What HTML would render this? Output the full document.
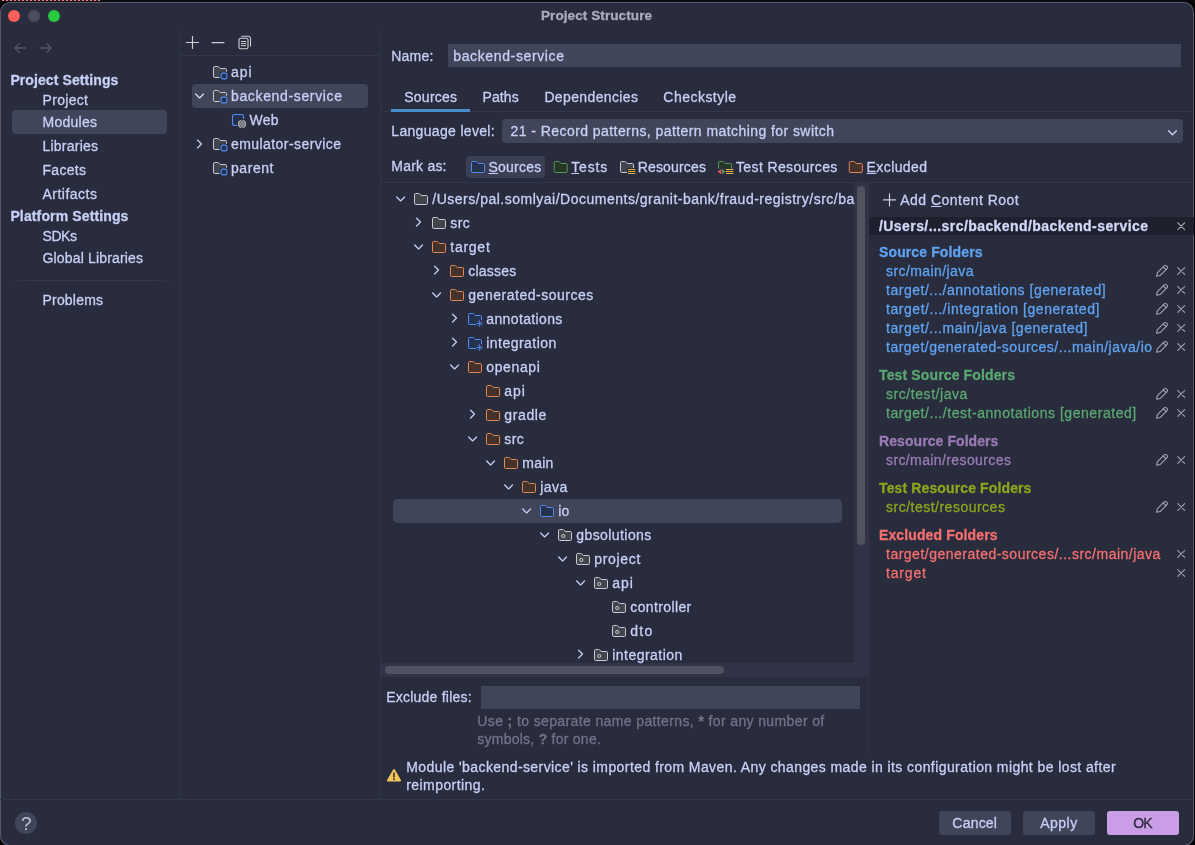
<!DOCTYPE html>
<html lang="en"><head><meta charset="utf-8"><title>Project Structure</title>
<style>
*{box-sizing:border-box}
html,body{margin:0;padding:0;background:#000;}
body{width:1195px;height:845px;overflow:hidden;position:relative;font-family:"Liberation Sans",sans-serif;font-size:14px;color:#c6d0f5;}
#top{position:absolute;left:0;top:0;width:1195px;height:2px;background:#0a0a0e}
#top i{position:absolute;left:2px;top:0;width:98px;height:1px;background:repeating-linear-gradient(90deg,#e9807e 0 2px,#2a2031 2px 4px)}
#win{position:absolute;left:0;top:1.5px;width:1194.2px;height:844.5px;background:#292c3c;border-radius:10px;overflow:hidden;
 box-shadow:inset 0 0 0 1px #565a6e}
#in{position:absolute;left:0;top:-1.5px;width:1195px;height:845px;will-change:transform}
.r,.i,.t{position:absolute}
.t{white-space:pre;line-height:20px;height:20px;-webkit-text-stroke:.3px}
.t b{font-weight:bold}
u{text-decoration:underline;text-decoration-thickness:1px;text-underline-offset:1px}
</style></head>
<body>
<div id="top"><i></i></div>
<div id="win"><div id="in">
<div class="r" style="left:8px;top:10px;width:12px;height:12px;background:#fe5f57;border-radius:6px;"></div>
<div class="r" style="left:28px;top:10px;width:12px;height:12px;background:#4a4d5e;border-radius:6px;"></div>
<div class="r" style="left:48px;top:10px;width:12px;height:12px;background:#28c840;border-radius:6px;"></div>
<svg class="i" style="left:13px;top:42px" width="14" height="12" viewBox="0 0 14 12"><path d="M12.5 6H2M6.3 1.6L1.8 6l4.5 4.4" fill="none" stroke="#54555f" stroke-width="1.3" stroke-linecap="round" stroke-linejoin="round"/></svg>
<svg class="i" style="left:39px;top:42px" width="14" height="12" viewBox="0 0 14 12"><path d="M1.5 6H12M7.7 1.6L12.2 6l-4.5 4.4" fill="none" stroke="#54555f" stroke-width="1.3" stroke-linecap="round" stroke-linejoin="round"/></svg>
<div class="r" style="left:12px;top:110px;width:155px;height:24px;background:#414559;border-radius:4px;"></div>
<div class="r" style="left:6px;top:280px;width:168px;height:1px;background:linear-gradient(90deg,transparent,#353a4e 14%,#353a4e 86%,transparent);"></div>
<div class="r" style="left:179px;top:31px;width:1px;height:768px;background:#32364a;"></div>
<div class="r" style="left:380px;top:31px;width:1px;height:768px;background:#32364a;"></div>
<svg class="i" style="left:186px;top:36px" width="14" height="14" viewBox="0 0 14 14"><path d="M6.5 .5v12M.5 6.5h12" fill="none" stroke="#cfd0d6" stroke-width="1.15" stroke-linecap="round"/></svg>
<svg class="i" style="left:211px;top:36px" width="14" height="14" viewBox="0 0 14 14"><path d="M1 6.6h12" fill="none" stroke="#cfd0d6" stroke-width="1.15" stroke-linecap="round"/></svg>
<svg class="i" style="left:238px;top:35px" width="14" height="15" viewBox="0 0 14 15"><g fill="none" stroke="#cfd0d6" stroke-width="1.1" stroke-linejoin="round" stroke-linecap="round"><rect x="1" y="3.2" width="9" height="10.6" rx="1.6"/><path d="M3.7 1.2h6.6a2.2 2.2 0 0 1 2.2 2.2v7.6"/><path d="M3.3 6.5h4.4M3.3 8.6h4.4M3.3 10.7h4.4" stroke-width="1"/></g></svg>
<div class="r" style="left:180px;top:55px;width:200px;height:1px;background:#32364a;"></div>
<div class="r" style="left:192px;top:84px;width:176px;height:24px;background:#414559;border-radius:4px;"></div>
<svg class="i" style="left:212px;top:64px" width="16" height="16" viewBox="0 0 16 16"><path d="M1.5 3.7a1.2 1.2 0 0 1 1.2-1.2h3a1.2 1.2 0 0 1 .8.3l1.9 1.7h4.9a1.2 1.2 0 0 1 1.2 1.2v6.6a1.2 1.2 0 0 1-1.2 1.2h-10.6a1.2 1.2 0 0 1-1.2-1.2z" fill="#43454c" stroke="#c9cad2" stroke-width="1" stroke-linejoin="round"/></svg>
<svg class="i" style="left:219px;top:71px" width="10" height="10" viewBox="0 0 10 10"><rect x="2.1" y="2.1" width="5.8" height="5.8" rx="1.7" fill="#292c3c" stroke="#292c3c" stroke-width="3.2"/><rect x="2.1" y="2.1" width="5.8" height="5.8" rx="1.7" fill="#25324d" stroke="#548af7" stroke-width="1.1"/></svg>
<svg class="i" style="left:193px;top:92px" width="13" height="9" viewBox="0 0 13 9"><g transform="translate(0.6 0.4)"><path d="M2.1 1.6L6 5.5L9.9 1.6" fill="none" stroke="#d3d8f5" stroke-width="1.35" stroke-linecap="round" stroke-linejoin="round"/></g></svg>
<svg class="i" style="left:212px;top:88px" width="16" height="16" viewBox="0 0 16 16"><path d="M1.5 3.7a1.2 1.2 0 0 1 1.2-1.2h3a1.2 1.2 0 0 1 .8.3l1.9 1.7h4.9a1.2 1.2 0 0 1 1.2 1.2v6.6a1.2 1.2 0 0 1-1.2 1.2h-10.6a1.2 1.2 0 0 1-1.2-1.2z" fill="#43454c" stroke="#c9cad2" stroke-width="1" stroke-linejoin="round"/></svg>
<svg class="i" style="left:219px;top:95px" width="10" height="10" viewBox="0 0 10 10"><rect x="2.1" y="2.1" width="5.8" height="5.8" rx="1.7" fill="#414559" stroke="#414559" stroke-width="3.2"/><rect x="2.1" y="2.1" width="5.8" height="5.8" rx="1.7" fill="#25324d" stroke="#548af7" stroke-width="1.1"/></svg>
<svg class="i" style="left:231px;top:113px" width="16" height="16" viewBox="0 0 16 16"><rect x="1.5" y="1.5" width="11" height="11" rx="2" fill="#25324d" stroke="#548af7" stroke-width="1.1"/><circle cx="11" cy="11" r="5.2" fill="#292c3c"/><circle cx="11" cy="11" r="4.1" fill="#d2d3d8"/><path d="M7 11h8M11 7v8M7.6 9h6.8M7.6 13h6.8" stroke="#4e505c" stroke-width=".75" fill="none"/><ellipse cx="11" cy="11" rx="2.1" ry="4" fill="none" stroke="#4e505c" stroke-width=".75"/></svg>
<svg class="i" style="left:195px;top:138px" width="9" height="13" viewBox="0 0 9 13"><g transform="translate(0.3 0)"><path d="M2.2 2.1L6.1 6L2.2 9.9" fill="none" stroke="#c2caf0" stroke-width="1.35" stroke-linecap="round" stroke-linejoin="round"/></g></svg>
<svg class="i" style="left:212px;top:136px" width="16" height="16" viewBox="0 0 16 16"><path d="M1.5 3.7a1.2 1.2 0 0 1 1.2-1.2h3a1.2 1.2 0 0 1 .8.3l1.9 1.7h4.9a1.2 1.2 0 0 1 1.2 1.2v6.6a1.2 1.2 0 0 1-1.2 1.2h-10.6a1.2 1.2 0 0 1-1.2-1.2z" fill="#43454c" stroke="#c9cad2" stroke-width="1" stroke-linejoin="round"/></svg>
<svg class="i" style="left:219px;top:143px" width="10" height="10" viewBox="0 0 10 10"><rect x="2.1" y="2.1" width="5.8" height="5.8" rx="1.7" fill="#292c3c" stroke="#292c3c" stroke-width="3.2"/><rect x="2.1" y="2.1" width="5.8" height="5.8" rx="1.7" fill="#25324d" stroke="#548af7" stroke-width="1.1"/></svg>
<svg class="i" style="left:212px;top:160px" width="16" height="16" viewBox="0 0 16 16"><path d="M1.5 3.7a1.2 1.2 0 0 1 1.2-1.2h3a1.2 1.2 0 0 1 .8.3l1.9 1.7h4.9a1.2 1.2 0 0 1 1.2 1.2v6.6a1.2 1.2 0 0 1-1.2 1.2h-10.6a1.2 1.2 0 0 1-1.2-1.2z" fill="#43454c" stroke="#c9cad2" stroke-width="1" stroke-linejoin="round"/></svg>
<svg class="i" style="left:219px;top:167px" width="10" height="10" viewBox="0 0 10 10"><rect x="2.1" y="2.1" width="5.8" height="5.8" rx="1.7" fill="#292c3c" stroke="#292c3c" stroke-width="3.2"/><rect x="2.1" y="2.1" width="5.8" height="5.8" rx="1.7" fill="#25324d" stroke="#548af7" stroke-width="1.1"/></svg>
<div class="r" style="left:447.5px;top:44px;width:733px;height:23px;background:#414559;"></div>
<div class="r" style="left:381px;top:111px;width:814px;height:1px;background:#32364a;"></div>
<div class="r" style="left:391px;top:109px;width:79px;height:3px;background:#4a8ccc;"></div>
<div class="r" style="left:501.5px;top:119px;width:681.5px;height:23.5px;background:#414559;border-radius:4px;"></div>
<svg class="i" style="left:1166px;top:129px" width="13" height="9" viewBox="0 0 13 9"><g transform="translate(0.5 0.2)"><path d="M2.1 1.6L6 5.5L9.9 1.6" fill="none" stroke="#c6d0f5" stroke-width="1.35" stroke-linecap="round" stroke-linejoin="round"/></g></svg>
<div class="r" style="left:466px;top:156px;width:79px;height:22px;background:#3b3f54;border-radius:4px;"></div>
<svg class="i" style="left:470px;top:159px" width="16" height="16" viewBox="0 0 16 16"><path d="M1.5 3.7a1.2 1.2 0 0 1 1.2-1.2h3a1.2 1.2 0 0 1 .8.3l1.9 1.7h4.9a1.2 1.2 0 0 1 1.2 1.2v6.6a1.2 1.2 0 0 1-1.2 1.2h-10.6a1.2 1.2 0 0 1-1.2-1.2z" fill="#25324d" stroke="#548af7" stroke-width="1" stroke-linejoin="round"/></svg>
<svg class="i" style="left:552px;top:159px" width="17" height="17" viewBox="0 0 17 17"><g transform="translate(0.7 0)"><path d="M1.5 3.7a1.2 1.2 0 0 1 1.2-1.2h3a1.2 1.2 0 0 1 .8.3l1.9 1.7h4.9a1.2 1.2 0 0 1 1.2 1.2v6.6a1.2 1.2 0 0 1-1.2 1.2h-10.6a1.2 1.2 0 0 1-1.2-1.2z" fill="#253627" stroke="#57965c" stroke-width="1" stroke-linejoin="round"/></g></svg>
<svg class="i" style="left:619px;top:159px" width="16" height="16" viewBox="0 0 16 16"><path d="M1.5 3.7a1.2 1.2 0 0 1 1.2-1.2h3a1.2 1.2 0 0 1 .8.3l1.9 1.7h4.9a1.2 1.2 0 0 1 1.2 1.2v6.6a1.2 1.2 0 0 1-1.2 1.2h-10.6a1.2 1.2 0 0 1-1.2-1.2z" fill="#43454c" stroke="#c9cad2" stroke-width="1" stroke-linejoin="round"/></svg>
<svg class="i" style="left:627px;top:167px" width="9" height="8" viewBox="0 0 9 8"><rect x="0" y="1" width="9" height="7" fill="#292c3c"/><path d="M1 2.5h7.3M1 4.5h7.3M1 6.5h7.3" stroke="#e8b339" stroke-width="1" fill="none"/></svg>
<svg class="i" style="left:717px;top:159px" width="16" height="16" viewBox="0 0 16 16"><path d="M1.5 3.7a1.2 1.2 0 0 1 1.2-1.2h3a1.2 1.2 0 0 1 .8.3l1.9 1.7h4.9a1.2 1.2 0 0 1 1.2 1.2v6.6a1.2 1.2 0 0 1-1.2 1.2h-10.6a1.2 1.2 0 0 1-1.2-1.2z" fill="#253627" stroke="#57965c" stroke-width="1" stroke-linejoin="round"/></svg>
<svg class="i" style="left:716px;top:167px" width="18" height="9" viewBox="0 0 18 9"><rect x="0" y="1.5" width="18" height="7.5" fill="#292c3c"/><path d="M5.3 2v5.2L1.6 4.6z" fill="#e55765"/><path d="M6.1 2v5.2l3.6-2.6z" fill="#57965c"/><path d="M10 2.5h7.3M10 4.5h7.3M10 6.5h7.3" stroke="#e8b339" stroke-width="1" fill="none"/></svg>
<svg class="i" style="left:847px;top:159px" width="17" height="17" viewBox="0 0 17 17"><g transform="translate(0.8 0)"><path d="M1.5 3.7a1.2 1.2 0 0 1 1.2-1.2h3a1.2 1.2 0 0 1 .8.3l1.9 1.7h4.9a1.2 1.2 0 0 1 1.2 1.2v6.6a1.2 1.2 0 0 1-1.2 1.2h-10.6a1.2 1.2 0 0 1-1.2-1.2z" fill="#45322b" stroke="#e08855" stroke-width="1" stroke-linejoin="round"/></g></svg>
<div class="r" style="left:381px;top:182px;width:814px;height:1px;background:#32364a;"></div>
<div class="r" style="left:393px;top:499px;width:449px;height:24px;background:#414559;border-radius:5px;"></div>
<svg class="i" style="left:394px;top:195px" width="13" height="9" viewBox="0 0 13 9"><g transform="translate(0.6 0.4)"><path d="M2.1 1.6L6 5.5L9.9 1.6" fill="none" stroke="#c2caf0" stroke-width="1.35" stroke-linecap="round" stroke-linejoin="round"/></g></svg>
<svg class="i" style="left:413px;top:191px" width="16" height="16" viewBox="0 0 16 16"><path d="M1.5 3.7a1.2 1.2 0 0 1 1.2-1.2h3a1.2 1.2 0 0 1 .8.3l1.9 1.7h4.9a1.2 1.2 0 0 1 1.2 1.2v6.6a1.2 1.2 0 0 1-1.2 1.2h-10.6a1.2 1.2 0 0 1-1.2-1.2z" fill="#43454c" stroke="#c9cad2" stroke-width="1" stroke-linejoin="round"/></svg>
<svg class="i" style="left:414px;top:216px" width="9" height="13" viewBox="0 0 9 13"><g transform="translate(0.4 0.1)"><path d="M2.2 2.1L6.1 6L2.2 9.9" fill="none" stroke="#c2caf0" stroke-width="1.35" stroke-linecap="round" stroke-linejoin="round"/></g></svg>
<svg class="i" style="left:431px;top:215px" width="16" height="16" viewBox="0 0 16 16"><path d="M1.5 3.7a1.2 1.2 0 0 1 1.2-1.2h3a1.2 1.2 0 0 1 .8.3l1.9 1.7h4.9a1.2 1.2 0 0 1 1.2 1.2v6.6a1.2 1.2 0 0 1-1.2 1.2h-10.6a1.2 1.2 0 0 1-1.2-1.2z" fill="#43454c" stroke="#c9cad2" stroke-width="1" stroke-linejoin="round"/></svg>
<svg class="i" style="left:412px;top:243px" width="13" height="9" viewBox="0 0 13 9"><g transform="translate(0.6 0.4)"><path d="M2.1 1.6L6 5.5L9.9 1.6" fill="none" stroke="#c2caf0" stroke-width="1.35" stroke-linecap="round" stroke-linejoin="round"/></g></svg>
<svg class="i" style="left:431px;top:239px" width="16" height="16" viewBox="0 0 16 16"><path d="M1.5 3.7a1.2 1.2 0 0 1 1.2-1.2h3a1.2 1.2 0 0 1 .8.3l1.9 1.7h4.9a1.2 1.2 0 0 1 1.2 1.2v6.6a1.2 1.2 0 0 1-1.2 1.2h-10.6a1.2 1.2 0 0 1-1.2-1.2z" fill="#45322b" stroke="#e08855" stroke-width="1" stroke-linejoin="round"/></svg>
<svg class="i" style="left:432px;top:264px" width="9" height="13" viewBox="0 0 9 13"><g transform="translate(0.4 0.1)"><path d="M2.2 2.1L6.1 6L2.2 9.9" fill="none" stroke="#c2caf0" stroke-width="1.35" stroke-linecap="round" stroke-linejoin="round"/></g></svg>
<svg class="i" style="left:449px;top:263px" width="16" height="16" viewBox="0 0 16 16"><path d="M1.5 3.7a1.2 1.2 0 0 1 1.2-1.2h3a1.2 1.2 0 0 1 .8.3l1.9 1.7h4.9a1.2 1.2 0 0 1 1.2 1.2v6.6a1.2 1.2 0 0 1-1.2 1.2h-10.6a1.2 1.2 0 0 1-1.2-1.2z" fill="#45322b" stroke="#e08855" stroke-width="1" stroke-linejoin="round"/></svg>
<svg class="i" style="left:430px;top:291px" width="13" height="9" viewBox="0 0 13 9"><g transform="translate(0.6 0.4)"><path d="M2.1 1.6L6 5.5L9.9 1.6" fill="none" stroke="#c2caf0" stroke-width="1.35" stroke-linecap="round" stroke-linejoin="round"/></g></svg>
<svg class="i" style="left:449px;top:287px" width="16" height="16" viewBox="0 0 16 16"><path d="M1.5 3.7a1.2 1.2 0 0 1 1.2-1.2h3a1.2 1.2 0 0 1 .8.3l1.9 1.7h4.9a1.2 1.2 0 0 1 1.2 1.2v6.6a1.2 1.2 0 0 1-1.2 1.2h-10.6a1.2 1.2 0 0 1-1.2-1.2z" fill="#45322b" stroke="#e08855" stroke-width="1" stroke-linejoin="round"/></svg>
<svg class="i" style="left:450px;top:312px" width="9" height="13" viewBox="0 0 9 13"><g transform="translate(0.4 0.1)"><path d="M2.2 2.1L6.1 6L2.2 9.9" fill="none" stroke="#c2caf0" stroke-width="1.35" stroke-linecap="round" stroke-linejoin="round"/></g></svg>
<svg class="i" style="left:467px;top:311px" width="16" height="16" viewBox="0 0 16 16"><path d="M1.5 3.7a1.2 1.2 0 0 1 1.2-1.2h3a1.2 1.2 0 0 1 .8.3l1.9 1.7h4.9a1.2 1.2 0 0 1 1.2 1.2v6.6a1.2 1.2 0 0 1-1.2 1.2h-10.6a1.2 1.2 0 0 1-1.2-1.2z" fill="#25324d" stroke="#548af7" stroke-width="1" stroke-linejoin="round"/></svg>
<svg class="i" style="left:475px;top:319px" width="9" height="9" viewBox="0 0 9 9"><rect x="1" y="1" width="8" height="8" fill="#292c3c"/><path d="M4.5 1.2v6.6M1.2 4.5h6.6M2.2 2.2l4.6 4.6M6.8 2.2L2.2 6.8" stroke="#548af7" stroke-width=".7" fill="none" stroke-linecap="round"/></svg>
<svg class="i" style="left:450px;top:336px" width="9" height="13" viewBox="0 0 9 13"><g transform="translate(0.4 0.1)"><path d="M2.2 2.1L6.1 6L2.2 9.9" fill="none" stroke="#c2caf0" stroke-width="1.35" stroke-linecap="round" stroke-linejoin="round"/></g></svg>
<svg class="i" style="left:467px;top:335px" width="16" height="16" viewBox="0 0 16 16"><path d="M1.5 3.7a1.2 1.2 0 0 1 1.2-1.2h3a1.2 1.2 0 0 1 .8.3l1.9 1.7h4.9a1.2 1.2 0 0 1 1.2 1.2v6.6a1.2 1.2 0 0 1-1.2 1.2h-10.6a1.2 1.2 0 0 1-1.2-1.2z" fill="#25324d" stroke="#548af7" stroke-width="1" stroke-linejoin="round"/></svg>
<svg class="i" style="left:475px;top:343px" width="9" height="9" viewBox="0 0 9 9"><rect x="1" y="1" width="8" height="8" fill="#292c3c"/><path d="M4.5 1.2v6.6M1.2 4.5h6.6M2.2 2.2l4.6 4.6M6.8 2.2L2.2 6.8" stroke="#548af7" stroke-width=".7" fill="none" stroke-linecap="round"/></svg>
<svg class="i" style="left:448px;top:363px" width="13" height="9" viewBox="0 0 13 9"><g transform="translate(0.6 0.4)"><path d="M2.1 1.6L6 5.5L9.9 1.6" fill="none" stroke="#c2caf0" stroke-width="1.35" stroke-linecap="round" stroke-linejoin="round"/></g></svg>
<svg class="i" style="left:467px;top:359px" width="16" height="16" viewBox="0 0 16 16"><path d="M1.5 3.7a1.2 1.2 0 0 1 1.2-1.2h3a1.2 1.2 0 0 1 .8.3l1.9 1.7h4.9a1.2 1.2 0 0 1 1.2 1.2v6.6a1.2 1.2 0 0 1-1.2 1.2h-10.6a1.2 1.2 0 0 1-1.2-1.2z" fill="#45322b" stroke="#e08855" stroke-width="1" stroke-linejoin="round"/></svg>
<svg class="i" style="left:485px;top:383px" width="16" height="16" viewBox="0 0 16 16"><path d="M1.5 3.7a1.2 1.2 0 0 1 1.2-1.2h3a1.2 1.2 0 0 1 .8.3l1.9 1.7h4.9a1.2 1.2 0 0 1 1.2 1.2v6.6a1.2 1.2 0 0 1-1.2 1.2h-10.6a1.2 1.2 0 0 1-1.2-1.2z" fill="#45322b" stroke="#e08855" stroke-width="1" stroke-linejoin="round"/></svg>
<svg class="i" style="left:468px;top:408px" width="9" height="13" viewBox="0 0 9 13"><g transform="translate(0.4 0.1)"><path d="M2.2 2.1L6.1 6L2.2 9.9" fill="none" stroke="#c2caf0" stroke-width="1.35" stroke-linecap="round" stroke-linejoin="round"/></g></svg>
<svg class="i" style="left:485px;top:407px" width="16" height="16" viewBox="0 0 16 16"><path d="M1.5 3.7a1.2 1.2 0 0 1 1.2-1.2h3a1.2 1.2 0 0 1 .8.3l1.9 1.7h4.9a1.2 1.2 0 0 1 1.2 1.2v6.6a1.2 1.2 0 0 1-1.2 1.2h-10.6a1.2 1.2 0 0 1-1.2-1.2z" fill="#45322b" stroke="#e08855" stroke-width="1" stroke-linejoin="round"/></svg>
<svg class="i" style="left:466px;top:435px" width="13" height="9" viewBox="0 0 13 9"><g transform="translate(0.6 0.4)"><path d="M2.1 1.6L6 5.5L9.9 1.6" fill="none" stroke="#c2caf0" stroke-width="1.35" stroke-linecap="round" stroke-linejoin="round"/></g></svg>
<svg class="i" style="left:485px;top:431px" width="16" height="16" viewBox="0 0 16 16"><path d="M1.5 3.7a1.2 1.2 0 0 1 1.2-1.2h3a1.2 1.2 0 0 1 .8.3l1.9 1.7h4.9a1.2 1.2 0 0 1 1.2 1.2v6.6a1.2 1.2 0 0 1-1.2 1.2h-10.6a1.2 1.2 0 0 1-1.2-1.2z" fill="#45322b" stroke="#e08855" stroke-width="1" stroke-linejoin="round"/></svg>
<svg class="i" style="left:484px;top:459px" width="13" height="9" viewBox="0 0 13 9"><g transform="translate(0.6 0.4)"><path d="M2.1 1.6L6 5.5L9.9 1.6" fill="none" stroke="#c2caf0" stroke-width="1.35" stroke-linecap="round" stroke-linejoin="round"/></g></svg>
<svg class="i" style="left:503px;top:455px" width="16" height="16" viewBox="0 0 16 16"><path d="M1.5 3.7a1.2 1.2 0 0 1 1.2-1.2h3a1.2 1.2 0 0 1 .8.3l1.9 1.7h4.9a1.2 1.2 0 0 1 1.2 1.2v6.6a1.2 1.2 0 0 1-1.2 1.2h-10.6a1.2 1.2 0 0 1-1.2-1.2z" fill="#45322b" stroke="#e08855" stroke-width="1" stroke-linejoin="round"/></svg>
<svg class="i" style="left:502px;top:483px" width="13" height="9" viewBox="0 0 13 9"><g transform="translate(0.6 0.4)"><path d="M2.1 1.6L6 5.5L9.9 1.6" fill="none" stroke="#c2caf0" stroke-width="1.35" stroke-linecap="round" stroke-linejoin="round"/></g></svg>
<svg class="i" style="left:521px;top:479px" width="16" height="16" viewBox="0 0 16 16"><path d="M1.5 3.7a1.2 1.2 0 0 1 1.2-1.2h3a1.2 1.2 0 0 1 .8.3l1.9 1.7h4.9a1.2 1.2 0 0 1 1.2 1.2v6.6a1.2 1.2 0 0 1-1.2 1.2h-10.6a1.2 1.2 0 0 1-1.2-1.2z" fill="#45322b" stroke="#e08855" stroke-width="1" stroke-linejoin="round"/></svg>
<svg class="i" style="left:520px;top:507px" width="13" height="9" viewBox="0 0 13 9"><g transform="translate(0.6 0.4)"><path d="M2.1 1.6L6 5.5L9.9 1.6" fill="none" stroke="#c2caf0" stroke-width="1.35" stroke-linecap="round" stroke-linejoin="round"/></g></svg>
<svg class="i" style="left:539px;top:503px" width="16" height="16" viewBox="0 0 16 16"><path d="M1.5 3.7a1.2 1.2 0 0 1 1.2-1.2h3a1.2 1.2 0 0 1 .8.3l1.9 1.7h4.9a1.2 1.2 0 0 1 1.2 1.2v6.6a1.2 1.2 0 0 1-1.2 1.2h-10.6a1.2 1.2 0 0 1-1.2-1.2z" fill="#25324d" stroke="#548af7" stroke-width="1" stroke-linejoin="round"/></svg>
<svg class="i" style="left:538px;top:531px" width="13" height="9" viewBox="0 0 13 9"><g transform="translate(0.6 0.4)"><path d="M2.1 1.6L6 5.5L9.9 1.6" fill="none" stroke="#c2caf0" stroke-width="1.35" stroke-linecap="round" stroke-linejoin="round"/></g></svg>
<svg class="i" style="left:557px;top:527px" width="16" height="16" viewBox="0 0 16 16"><path d="M1.5 3.7a1.2 1.2 0 0 1 1.2-1.2h3a1.2 1.2 0 0 1 .8.3l1.9 1.7h4.9a1.2 1.2 0 0 1 1.2 1.2v6.6a1.2 1.2 0 0 1-1.2 1.2h-10.6a1.2 1.2 0 0 1-1.2-1.2z" fill="#43454c" stroke="#c9cad2" stroke-width="1" stroke-linejoin="round"/></svg>
<svg class="i" style="left:560px;top:533px" width="7" height="7" viewBox="0 0 7 7"><g transform="translate(0.3 0)"><circle cx="3" cy="3" r="1.6" fill="none" stroke="#c9cad2" stroke-width="1"/></g></svg>
<svg class="i" style="left:556px;top:555px" width="13" height="9" viewBox="0 0 13 9"><g transform="translate(0.6 0.4)"><path d="M2.1 1.6L6 5.5L9.9 1.6" fill="none" stroke="#c2caf0" stroke-width="1.35" stroke-linecap="round" stroke-linejoin="round"/></g></svg>
<svg class="i" style="left:575px;top:551px" width="16" height="16" viewBox="0 0 16 16"><path d="M1.5 3.7a1.2 1.2 0 0 1 1.2-1.2h3a1.2 1.2 0 0 1 .8.3l1.9 1.7h4.9a1.2 1.2 0 0 1 1.2 1.2v6.6a1.2 1.2 0 0 1-1.2 1.2h-10.6a1.2 1.2 0 0 1-1.2-1.2z" fill="#43454c" stroke="#c9cad2" stroke-width="1" stroke-linejoin="round"/></svg>
<svg class="i" style="left:578px;top:557px" width="7" height="7" viewBox="0 0 7 7"><g transform="translate(0.3 0)"><circle cx="3" cy="3" r="1.6" fill="none" stroke="#c9cad2" stroke-width="1"/></g></svg>
<svg class="i" style="left:574px;top:579px" width="13" height="9" viewBox="0 0 13 9"><g transform="translate(0.6 0.4)"><path d="M2.1 1.6L6 5.5L9.9 1.6" fill="none" stroke="#c2caf0" stroke-width="1.35" stroke-linecap="round" stroke-linejoin="round"/></g></svg>
<svg class="i" style="left:593px;top:575px" width="16" height="16" viewBox="0 0 16 16"><path d="M1.5 3.7a1.2 1.2 0 0 1 1.2-1.2h3a1.2 1.2 0 0 1 .8.3l1.9 1.7h4.9a1.2 1.2 0 0 1 1.2 1.2v6.6a1.2 1.2 0 0 1-1.2 1.2h-10.6a1.2 1.2 0 0 1-1.2-1.2z" fill="#43454c" stroke="#c9cad2" stroke-width="1" stroke-linejoin="round"/></svg>
<svg class="i" style="left:596px;top:581px" width="7" height="7" viewBox="0 0 7 7"><g transform="translate(0.3 0)"><circle cx="3" cy="3" r="1.6" fill="none" stroke="#c9cad2" stroke-width="1"/></g></svg>
<svg class="i" style="left:611px;top:599px" width="16" height="16" viewBox="0 0 16 16"><path d="M1.5 3.7a1.2 1.2 0 0 1 1.2-1.2h3a1.2 1.2 0 0 1 .8.3l1.9 1.7h4.9a1.2 1.2 0 0 1 1.2 1.2v6.6a1.2 1.2 0 0 1-1.2 1.2h-10.6a1.2 1.2 0 0 1-1.2-1.2z" fill="#43454c" stroke="#c9cad2" stroke-width="1" stroke-linejoin="round"/></svg>
<svg class="i" style="left:614px;top:605px" width="7" height="7" viewBox="0 0 7 7"><g transform="translate(0.3 0)"><circle cx="3" cy="3" r="1.6" fill="none" stroke="#c9cad2" stroke-width="1"/></g></svg>
<svg class="i" style="left:611px;top:623px" width="16" height="16" viewBox="0 0 16 16"><path d="M1.5 3.7a1.2 1.2 0 0 1 1.2-1.2h3a1.2 1.2 0 0 1 .8.3l1.9 1.7h4.9a1.2 1.2 0 0 1 1.2 1.2v6.6a1.2 1.2 0 0 1-1.2 1.2h-10.6a1.2 1.2 0 0 1-1.2-1.2z" fill="#43454c" stroke="#c9cad2" stroke-width="1" stroke-linejoin="round"/></svg>
<svg class="i" style="left:614px;top:629px" width="7" height="7" viewBox="0 0 7 7"><g transform="translate(0.3 0)"><circle cx="3" cy="3" r="1.6" fill="none" stroke="#c9cad2" stroke-width="1"/></g></svg>
<svg class="i" style="left:576px;top:648px" width="9" height="13" viewBox="0 0 9 13"><g transform="translate(0.4 0.1)"><path d="M2.2 2.1L6.1 6L2.2 9.9" fill="none" stroke="#c2caf0" stroke-width="1.35" stroke-linecap="round" stroke-linejoin="round"/></g></svg>
<svg class="i" style="left:593px;top:647px" width="16" height="16" viewBox="0 0 16 16"><path d="M1.5 3.7a1.2 1.2 0 0 1 1.2-1.2h3a1.2 1.2 0 0 1 .8.3l1.9 1.7h4.9a1.2 1.2 0 0 1 1.2 1.2v6.6a1.2 1.2 0 0 1-1.2 1.2h-10.6a1.2 1.2 0 0 1-1.2-1.2z" fill="#43454c" stroke="#c9cad2" stroke-width="1" stroke-linejoin="round"/></svg>
<svg class="i" style="left:596px;top:653px" width="7" height="7" viewBox="0 0 7 7"><g transform="translate(0.3 0)"><circle cx="3" cy="3" r="1.6" fill="none" stroke="#c9cad2" stroke-width="1"/></g></svg>
<div class="r" style="left:381px;top:663px;width:488px;height:21px;background:#292c3c;"></div>
<div class="r" style="left:381px;top:663px;width:488px;height:14px;background:#303446;"></div>
<div class="r" style="left:854px;top:183px;width:15px;height:494px;background:#303446;"></div>
<div class="r" style="left:857px;top:185.5px;width:8px;height:359.5px;background:#50535f;border-radius:4px;"></div>
<div class="r" style="left:384.5px;top:665.5px;width:339px;height:8px;background:#50535f;border-radius:4px;"></div>
<div class="r" style="left:868px;top:677px;width:1px;height:76px;background:#32364a;"></div>
<div class="r" style="left:480.5px;top:685.5px;width:379px;height:23px;background:#414559;"></div>
<svg class="i" style="left:386px;top:767px" width="16" height="16" viewBox="0 0 16 16"><path d="M8 1.9a1 1 0 0 1 .87.5l6 10.6a1 1 0 0 1-.87 1.5H2a1 1 0 0 1-.87-1.5l6-10.6A1 1 0 0 1 8 1.9z" fill="#f2c55c"/><path d="M8 6v4" stroke="#3a3324" stroke-width="1.6" stroke-linecap="round"/><circle cx="8" cy="12.2" r=".95" fill="#3a3324"/></svg>
<div class="r" style="left:0px;top:799px;width:1195px;height:1px;background:#32364a;"></div>
<svg class="i" style="left:883px;top:193px" width="15" height="15" viewBox="0 0 15 15"><g transform="translate(0 0.4)"><path d="M6.5 .5v12M.5 6.5h12" fill="none" stroke="#cfd0d6" stroke-width="1.15" stroke-linecap="round"/></g></svg>
<div class="r" style="left:869px;top:217px;width:325px;height:18px;background:#1e202e;"></div>
<svg class="i" style="left:1175px;top:220px" width="13" height="13" viewBox="0 0 13 13"><g transform="translate(0.2 0.2)"><path d="M2.55 2.55L9.45 9.45M9.45 2.55L2.55 9.45" fill="none" stroke="#a0a1ab" stroke-width="1.1" stroke-linecap="round"/></g></svg>
<svg class="i" style="left:1154px;top:262px" width="17" height="17" viewBox="0 0 17 17"><g transform="translate(0.3 0.6)"><g fill="none" stroke="#a7a8b2" stroke-width="1.05" stroke-linejoin="round" stroke-linecap="round"><path d="M2.3 13.7l.7-3.5 6.9-6.9a1.6 1.6 0 0 1 2.3 0l.5.5a1.6 1.6 0 0 1 0 2.3l-6.9 6.9z"/><path d="M8.9 4.3l2.8 2.8"/></g></g></svg>
<svg class="i" style="left:1175px;top:265px" width="13" height="13" viewBox="0 0 13 13"><g transform="translate(0.2 0)"><path d="M2.55 2.55L9.45 9.45M9.45 2.55L2.55 9.45" fill="none" stroke="#a0a1ab" stroke-width="1.1" stroke-linecap="round"/></g></svg>
<svg class="i" style="left:1154px;top:281px" width="17" height="17" viewBox="0 0 17 17"><g transform="translate(0.3 0.6)"><g fill="none" stroke="#a7a8b2" stroke-width="1.05" stroke-linejoin="round" stroke-linecap="round"><path d="M2.3 13.7l.7-3.5 6.9-6.9a1.6 1.6 0 0 1 2.3 0l.5.5a1.6 1.6 0 0 1 0 2.3l-6.9 6.9z"/><path d="M8.9 4.3l2.8 2.8"/></g></g></svg>
<svg class="i" style="left:1175px;top:284px" width="13" height="13" viewBox="0 0 13 13"><g transform="translate(0.2 0)"><path d="M2.55 2.55L9.45 9.45M9.45 2.55L2.55 9.45" fill="none" stroke="#a0a1ab" stroke-width="1.1" stroke-linecap="round"/></g></svg>
<svg class="i" style="left:1154px;top:300px" width="17" height="17" viewBox="0 0 17 17"><g transform="translate(0.3 0.6)"><g fill="none" stroke="#a7a8b2" stroke-width="1.05" stroke-linejoin="round" stroke-linecap="round"><path d="M2.3 13.7l.7-3.5 6.9-6.9a1.6 1.6 0 0 1 2.3 0l.5.5a1.6 1.6 0 0 1 0 2.3l-6.9 6.9z"/><path d="M8.9 4.3l2.8 2.8"/></g></g></svg>
<svg class="i" style="left:1175px;top:303px" width="13" height="13" viewBox="0 0 13 13"><g transform="translate(0.2 0)"><path d="M2.55 2.55L9.45 9.45M9.45 2.55L2.55 9.45" fill="none" stroke="#a0a1ab" stroke-width="1.1" stroke-linecap="round"/></g></svg>
<svg class="i" style="left:1154px;top:319px" width="17" height="17" viewBox="0 0 17 17"><g transform="translate(0.3 0.6)"><g fill="none" stroke="#a7a8b2" stroke-width="1.05" stroke-linejoin="round" stroke-linecap="round"><path d="M2.3 13.7l.7-3.5 6.9-6.9a1.6 1.6 0 0 1 2.3 0l.5.5a1.6 1.6 0 0 1 0 2.3l-6.9 6.9z"/><path d="M8.9 4.3l2.8 2.8"/></g></g></svg>
<svg class="i" style="left:1175px;top:322px" width="13" height="13" viewBox="0 0 13 13"><g transform="translate(0.2 0)"><path d="M2.55 2.55L9.45 9.45M9.45 2.55L2.55 9.45" fill="none" stroke="#a0a1ab" stroke-width="1.1" stroke-linecap="round"/></g></svg>
<svg class="i" style="left:1154px;top:338px" width="17" height="17" viewBox="0 0 17 17"><g transform="translate(0.3 0.6)"><g fill="none" stroke="#a7a8b2" stroke-width="1.05" stroke-linejoin="round" stroke-linecap="round"><path d="M2.3 13.7l.7-3.5 6.9-6.9a1.6 1.6 0 0 1 2.3 0l.5.5a1.6 1.6 0 0 1 0 2.3l-6.9 6.9z"/><path d="M8.9 4.3l2.8 2.8"/></g></g></svg>
<svg class="i" style="left:1175px;top:341px" width="13" height="13" viewBox="0 0 13 13"><g transform="translate(0.2 0)"><path d="M2.55 2.55L9.45 9.45M9.45 2.55L2.55 9.45" fill="none" stroke="#a0a1ab" stroke-width="1.1" stroke-linecap="round"/></g></svg>
<svg class="i" style="left:1154px;top:385px" width="17" height="17" viewBox="0 0 17 17"><g transform="translate(0.3 0.6)"><g fill="none" stroke="#a7a8b2" stroke-width="1.05" stroke-linejoin="round" stroke-linecap="round"><path d="M2.3 13.7l.7-3.5 6.9-6.9a1.6 1.6 0 0 1 2.3 0l.5.5a1.6 1.6 0 0 1 0 2.3l-6.9 6.9z"/><path d="M8.9 4.3l2.8 2.8"/></g></g></svg>
<svg class="i" style="left:1175px;top:388px" width="13" height="13" viewBox="0 0 13 13"><g transform="translate(0.2 0)"><path d="M2.55 2.55L9.45 9.45M9.45 2.55L2.55 9.45" fill="none" stroke="#a0a1ab" stroke-width="1.1" stroke-linecap="round"/></g></svg>
<svg class="i" style="left:1154px;top:404px" width="17" height="17" viewBox="0 0 17 17"><g transform="translate(0.3 0.6)"><g fill="none" stroke="#a7a8b2" stroke-width="1.05" stroke-linejoin="round" stroke-linecap="round"><path d="M2.3 13.7l.7-3.5 6.9-6.9a1.6 1.6 0 0 1 2.3 0l.5.5a1.6 1.6 0 0 1 0 2.3l-6.9 6.9z"/><path d="M8.9 4.3l2.8 2.8"/></g></g></svg>
<svg class="i" style="left:1175px;top:407px" width="13" height="13" viewBox="0 0 13 13"><g transform="translate(0.2 0)"><path d="M2.55 2.55L9.45 9.45M9.45 2.55L2.55 9.45" fill="none" stroke="#a0a1ab" stroke-width="1.1" stroke-linecap="round"/></g></svg>
<svg class="i" style="left:1154px;top:451px" width="17" height="17" viewBox="0 0 17 17"><g transform="translate(0.3 0.6)"><g fill="none" stroke="#a7a8b2" stroke-width="1.05" stroke-linejoin="round" stroke-linecap="round"><path d="M2.3 13.7l.7-3.5 6.9-6.9a1.6 1.6 0 0 1 2.3 0l.5.5a1.6 1.6 0 0 1 0 2.3l-6.9 6.9z"/><path d="M8.9 4.3l2.8 2.8"/></g></g></svg>
<svg class="i" style="left:1175px;top:454px" width="13" height="13" viewBox="0 0 13 13"><g transform="translate(0.2 0)"><path d="M2.55 2.55L9.45 9.45M9.45 2.55L2.55 9.45" fill="none" stroke="#a0a1ab" stroke-width="1.1" stroke-linecap="round"/></g></svg>
<svg class="i" style="left:1154px;top:498px" width="17" height="17" viewBox="0 0 17 17"><g transform="translate(0.3 0.6)"><g fill="none" stroke="#a7a8b2" stroke-width="1.05" stroke-linejoin="round" stroke-linecap="round"><path d="M2.3 13.7l.7-3.5 6.9-6.9a1.6 1.6 0 0 1 2.3 0l.5.5a1.6 1.6 0 0 1 0 2.3l-6.9 6.9z"/><path d="M8.9 4.3l2.8 2.8"/></g></g></svg>
<svg class="i" style="left:1175px;top:501px" width="13" height="13" viewBox="0 0 13 13"><g transform="translate(0.2 0)"><path d="M2.55 2.55L9.45 9.45M9.45 2.55L2.55 9.45" fill="none" stroke="#a0a1ab" stroke-width="1.1" stroke-linecap="round"/></g></svg>
<svg class="i" style="left:1175px;top:548px" width="13" height="13" viewBox="0 0 13 13"><g transform="translate(0.2 0)"><path d="M2.55 2.55L9.45 9.45M9.45 2.55L2.55 9.45" fill="none" stroke="#a0a1ab" stroke-width="1.1" stroke-linecap="round"/></g></svg>
<svg class="i" style="left:1175px;top:567px" width="13" height="13" viewBox="0 0 13 13"><g transform="translate(0.2 0)"><path d="M2.55 2.55L9.45 9.45M9.45 2.55L2.55 9.45" fill="none" stroke="#a0a1ab" stroke-width="1.1" stroke-linecap="round"/></g></svg>
<div class="r" style="left:14.6px;top:811.6px;width:22.6px;height:22.6px;background:#414559;border-radius:11.3px;"></div>
<div class="r" style="left:938.5px;top:811px;width:72.5px;height:24px;background:#414559;border-radius:3px;"></div>
<div class="r" style="left:1023.2px;top:811px;width:72px;height:24px;background:#414559;border-radius:3px;"></div>
<div class="r" style="left:1107px;top:811px;width:72px;height:24px;background:#ca9ee6;border-radius:3px;"></div>
<div class="t" style="left:541.00px;top:5.50px;color:#aaacba;font-weight:bold;font-size:13.5px;letter-spacing:0.092px;">Project Structure</div>
<div class="t" style="left:10.40px;top:70.00px;font-weight:bold;letter-spacing:0.094px;">Project Settings</div>
<div class="t" style="left:42.50px;top:90.00px;letter-spacing:0.320px;">Project</div>
<div class="t" style="left:42.50px;top:112.00px;letter-spacing:0.263px;">Modules</div>
<div class="t" style="left:42.50px;top:136.00px;letter-spacing:0.225px;">Libraries</div>
<div class="t" style="left:42.50px;top:160.00px;letter-spacing:0.297px;">Facets</div>
<div class="t" style="left:42.50px;top:184.00px;letter-spacing:0.490px;">Artifacts</div>
<div class="t" style="left:10.40px;top:206.00px;font-weight:bold;letter-spacing:0.131px;">Platform Settings</div>
<div class="t" style="left:42.50px;top:226.00px;letter-spacing:-0.432px;">SDKs</div>
<div class="t" style="left:42.50px;top:248.00px;letter-spacing:0.163px;">Global Libraries</div>
<div class="t" style="left:42.50px;top:290.00px;letter-spacing:0.194px;">Problems</div>
<div class="t" style="left:231.00px;top:62.00px;letter-spacing:0.906px;">api</div>
<div class="t" style="left:231.00px;top:86.00px;letter-spacing:0.647px;">backend-service</div>
<div class="t" style="left:249.50px;top:110.00px;letter-spacing:0.227px;">Web</div>
<div class="t" style="left:231.00px;top:134.00px;letter-spacing:0.434px;">emulator-service</div>
<div class="t" style="left:231.00px;top:158.00px;letter-spacing:0.559px;">parent</div>
<div class="t" style="left:391.30px;top:46.00px;letter-spacing:0.191px;">Name:</div>
<div class="t" style="left:453.30px;top:46.00px;letter-spacing:0.626px;">backend-service</div>
<div class="t" style="left:404.30px;top:87.00px;letter-spacing:0.223px;">Sources</div>
<div class="t" style="left:482.40px;top:87.00px;letter-spacing:0.147px;">Paths</div>
<div class="t" style="left:544.40px;top:87.00px;letter-spacing:0.371px;">Dependencies</div>
<div class="t" style="left:663.30px;top:87.00px;letter-spacing:0.481px;">Checkstyle</div>
<div class="t" style="left:391.30px;top:121.00px;letter-spacing:0.323px;">Language level:</div>
<div class="t" style="left:510.60px;top:121.00px;letter-spacing:0.431px;">21 - Record patterns, pattern matching for switch</div>
<div class="t" style="left:391.30px;top:156.30px;letter-spacing:0.216px;">Mark as:</div>
<div class="t" style="left:488.50px;top:156.50px;letter-spacing:0.221px;"><u>S</u>ources</div>
<div class="t" style="left:571.30px;top:156.50px;letter-spacing:0.803px;"><u>T</u>ests</div>
<div class="t" style="left:637.70px;top:156.50px;letter-spacing:0.172px;">Resources</div>
<div class="t" style="left:736.00px;top:156.50px;letter-spacing:0.370px;">Test Resources</div>
<div class="t" style="left:866.60px;top:156.50px;letter-spacing:0.399px;"><u>E</u>xcluded</div>
<div class="t" style="left:432.30px;top:189.00px;letter-spacing:0.502px;">/Users/pal.somlyai/Documents/granit-bank/fraud-registry/src/ba</div>
<div class="t" style="left:450.30px;top:213.00px;letter-spacing:0.414px;">src</div>
<div class="t" style="left:450.30px;top:237.00px;letter-spacing:0.738px;">target</div>
<div class="t" style="left:468.30px;top:261.00px;letter-spacing:0.219px;">classes</div>
<div class="t" style="left:468.30px;top:285.00px;letter-spacing:0.516px;">generated-sources</div>
<div class="t" style="left:486.30px;top:309.00px;letter-spacing:0.359px;">annotations</div>
<div class="t" style="left:486.30px;top:333.00px;letter-spacing:0.461px;">integration</div>
<div class="t" style="left:486.30px;top:357.00px;letter-spacing:0.612px;">openapi</div>
<div class="t" style="left:504.30px;top:381.00px;letter-spacing:0.906px;">api</div>
<div class="t" style="left:504.30px;top:405.00px;letter-spacing:0.616px;">gradle</div>
<div class="t" style="left:504.30px;top:429.00px;letter-spacing:0.414px;">src</div>
<div class="t" style="left:522.30px;top:453.00px;letter-spacing:0.214px;">main</div>
<div class="t" style="left:540.30px;top:477.00px;letter-spacing:0.438px;">java</div>
<div class="t" style="left:558.30px;top:501.00px;letter-spacing:0.094px;">io</div>
<div class="t" style="left:576.30px;top:525.00px;letter-spacing:0.417px;">gbsolutions</div>
<div class="t" style="left:594.30px;top:549.00px;letter-spacing:0.661px;">project</div>
<div class="t" style="left:612.30px;top:573.00px;letter-spacing:0.906px;">api</div>
<div class="t" style="left:630.30px;top:597.00px;letter-spacing:0.378px;">controller</div>
<div class="t" style="left:630.30px;top:621.00px;letter-spacing:1.266px;">dto</div>
<div class="t" style="left:612.30px;top:645.00px;letter-spacing:0.461px;">integration</div>
<div class="t" style="left:386.20px;top:687.00px;letter-spacing:0.232px;">Exclude files:</div>
<div class="t" style="left:477.30px;top:711.00px;color:#717389;letter-spacing:0.379px;">Use <b>;</b> to separate name patterns, <b>*</b> for any number of</div>
<div class="t" style="left:477.30px;top:729.00px;color:#717389;letter-spacing:0.247px;">symbols, <b>?</b> for one.</div>
<div class="t" style="left:406.30px;top:757.00px;letter-spacing:0.412px;">Module 'backend-service' is imported from Maven. Any changes made in its configuration might be lost after</div>
<div class="t" style="left:406.30px;top:775.00px;letter-spacing:0.416px;">reimporting.</div>
<div class="t" style="left:900.20px;top:190.00px;letter-spacing:0.478px;">Add <u>C</u>ontent Root</div>
<div class="t" style="left:879.00px;top:216.00px;color:#d3d8f7;font-weight:bold;letter-spacing:0.425px;">/Users/...src/backend/backend-service</div>
<div class="t" style="left:879.00px;top:242.00px;color:#5fa2f0;font-weight:bold;letter-spacing:0.121px;">Source Folders</div>
<div class="t" style="left:886.00px;top:261.00px;color:#5fa2f0;letter-spacing:0.419px;">src/main/java</div>
<div class="t" style="left:886.00px;top:280.00px;color:#5fa2f0;letter-spacing:0.522px;">target/.../annotations [generated]</div>
<div class="t" style="left:886.00px;top:299.00px;color:#5fa2f0;letter-spacing:0.547px;">target/.../integration [generated]</div>
<div class="t" style="left:886.00px;top:318.00px;color:#5fa2f0;letter-spacing:0.513px;">target/...main/java [generated]</div>
<div class="t" style="left:886.00px;top:337.00px;color:#5fa2f0;letter-spacing:0.497px;">target/generated-sources/...main/java/io</div>
<div class="t" style="left:879.00px;top:365.00px;color:#5ba672;font-weight:bold;letter-spacing:0.135px;">Test Source Folders</div>
<div class="t" style="left:886.00px;top:384.00px;color:#5ba672;letter-spacing:0.558px;">src/test/java</div>
<div class="t" style="left:886.00px;top:403.00px;color:#5ba672;letter-spacing:0.542px;">target/.../test-annotations [generated]</div>
<div class="t" style="left:879.00px;top:431.00px;color:#9a7bb5;font-weight:bold;letter-spacing:0.076px;">Resource Folders</div>
<div class="t" style="left:886.00px;top:450.00px;color:#9a7bb5;letter-spacing:0.390px;">src/main/resources</div>
<div class="t" style="left:879.00px;top:478.00px;color:#8aa51e;font-weight:bold;letter-spacing:0.125px;">Test Resource Folders</div>
<div class="t" style="left:886.00px;top:497.00px;color:#8aa51e;letter-spacing:0.495px;">src/test/resources</div>
<div class="t" style="left:879.00px;top:525.00px;color:#f46f6f;font-weight:bold;letter-spacing:0.120px;">Excluded Folders</div>
<div class="t" style="left:886.00px;top:544.00px;color:#f46f6f;letter-spacing:0.498px;">target/generated-sources/...src/main/java</div>
<div class="t" style="left:886.00px;top:563.00px;color:#f46f6f;letter-spacing:0.817px;">target</div>
<div class="t" style="left:21.00px;top:813.60px;color:#c4c6d2;font-size:19px;-webkit-text-stroke:0;">?</div>
<div class="t" style="left:952.30px;top:813.00px;letter-spacing:0.221px;">Cancel</div>
<div class="t" style="left:1040.20px;top:813.00px;letter-spacing:0.492px;">Apply</div>
<div class="t" style="left:1133.30px;top:813.00px;color:#2b2a3d;letter-spacing:-1.034px;">OK</div>
</div></div>
</body></html>
